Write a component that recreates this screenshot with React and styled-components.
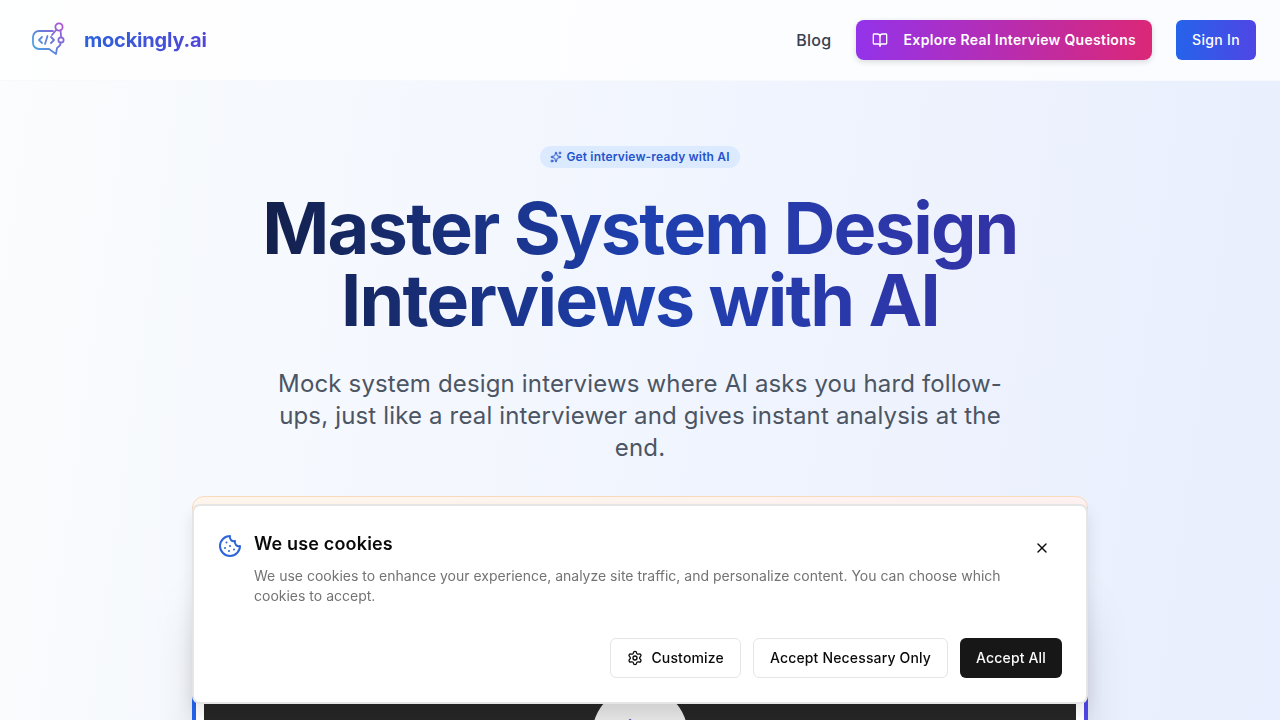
import React, { useState } from 'react';
import styled, { createGlobalStyle } from 'styled-components';
import { BookOpen, Cookie, Settings, Sparkles, X } from 'lucide-react';

const Logo = () => (
  <svg width="40" height="40" viewBox="0 0 40 40" fill="none" aria-hidden="true">
    <defs>
      <linearGradient id="logoStroke" x1="4" y1="34" x2="36" y2="6" gradientUnits="userSpaceOnUse">
        <stop offset="0" stopColor="#45aeea" />
        <stop offset="0.5" stopColor="#6480d8" />
        <stop offset="1" stopColor="#b050d4" />
      </linearGradient>
    </defs>
    <g stroke="url(#logoStroke)" strokeWidth="1.8" strokeLinecap="round" strokeLinejoin="round">
      <path d="M25 11H11a6 6 0 0 0-6 6v6a6 6 0 0 0 6 6h10l7 5 1-6c2-1 3.500-3 3.800-5.500" />
      <circle cx="31" cy="7" r="3.600" />
      <circle cx="33" cy="20" r="2.600" />
      <path d="M28.500 9.500L24 15M32.500 10.500l.7 7" />
      <path d="M14 17l-3 3 3 3M19.500 16l-2.500 8M23 17l3 3-3 3" />
    </g>
  </svg>
);

const App = () => {
  const [showCookies, setShowCookies] = useState(true);
  const closeCookies = () => setShowCookies(false);

  return (
    <Page>
      <GlobalStyle />
      <Header>
        <Brand href="/">
          <Logo />
          <BrandName>mockingly.ai</BrandName>
        </Brand>
        <Nav>
          <NavLink href="/blog">Blog</NavLink>
          <ExploreButton type="button">
            <BookOpen size={16} />
            Explore Real Interview Questions
          </ExploreButton>
          <SignInButton type="button">Sign In</SignInButton>
        </Nav>
      </Header>

      <Hero>
        <Badge>
          <Sparkles size={12} />
          Get interview-ready with AI
        </Badge>
        <Title>Master System Design Interviews with AI</Title>
        <Subtitle>
          Mock system design interviews where AI asks you hard follow-ups, just like a real
          interviewer and gives instant analysis at the end.
        </Subtitle>
        <Showcase>
          <Notice />
          <VideoFrame>
            <Video>
              <PlayButton type="button" aria-label="Play video">
                <svg width="40" height="40" viewBox="0 0 40 40" aria-hidden="true">
                  <path
                    d="M10 5l22 15-22 15z"
                    fill="#4338ca"
                    stroke="#4338ca"
                    strokeWidth="2"
                    strokeLinejoin="round"
                  />
                </svg>
              </PlayButton>
            </Video>
          </VideoFrame>
        </Showcase>
      </Hero>

      {showCookies && (
        <CookieBanner aria-labelledby="cookie-title">
          <CookieTop>
            <Cookie size={24} color="#2d64d8" />
            <CookieText>
              <CookieTitle id="cookie-title">We use cookies</CookieTitle>
              <CookieBody>
                We use cookies to enhance your experience, analyze site traffic, and personalize
                content. You can choose which cookies to accept.
              </CookieBody>
            </CookieText>
            <CloseButton type="button" aria-label="Close" onClick={closeCookies}>
              <X size={16} />
            </CloseButton>
          </CookieTop>
          <CookieActions>
            <OutlineButton type="button">
              <Settings size={16} />
              Customize
            </OutlineButton>
            <OutlineButton type="button" onClick={closeCookies}>Accept Necessary Only</OutlineButton>
            <DarkButton type="button" onClick={closeCookies}>Accept All</DarkButton>
          </CookieActions>
        </CookieBanner>
      )}
    </Page>
  );
};

// Styled Components
const GlobalStyle = createGlobalStyle`
  *, *::before, *::after {
    box-sizing: border-box;
  }

  html {
    scrollbar-width: none;
  }

  body {
    margin: 0;
    font-family: Inter, 'Liberation Sans', sans-serif;
    letter-spacing: 0.01em;
  }

  h1, h2, p {
    margin: 0;
  }

  button {
    font-family: inherit;
    letter-spacing: inherit;
    cursor: pointer;
  }

  svg {
    flex-shrink: 0;
  }
`;

const Page = styled.div`
  min-height: 100vh;
  background: linear-gradient(98deg, #fafcfd, #f1f5fe 50%, #e8eefd);
`;

const Header = styled.header`
  display: flex;
  align-items: center;
  justify-content: space-between;
  padding: 20px 24px;
  background: rgba(255, 255, 255, 0.8);
  border-bottom: 1px solid #f7f9fd;
`;

const Brand = styled.a`
  display: flex;
  align-items: center;
  gap: 16px;
  padding-left: 4px;
  text-decoration: none;
`;

const BrandName = styled.span`
  font-size: 20px;
  font-weight: 700;
  line-height: 28px;
  letter-spacing: -0.01em;
  color: transparent;
  background: linear-gradient(90deg, #2b62dc, #5145d6);
  background-clip: text;
`;

const Nav = styled.nav`
  display: flex;
  align-items: center;
  gap: 24px;
  letter-spacing: 0.02em;
`;

const NavLink = styled.a`
  font-size: 16px;
  font-weight: 500;
  line-height: 24px;
  color: #374151;
  text-decoration: none;
`;

const Button = styled.button`
  display: inline-flex;
  align-items: center;
  justify-content: center;
  gap: 8px;
  height: 40px;
  padding: 0 16px;
  border: none;
  border-radius: 6px;
  font-size: 14px;
  font-weight: 500;
  line-height: 20px;
  white-space: nowrap;
`;

const ExploreButton = styled(Button)`
  gap: 16px;
  border-radius: 8px;
  font-weight: 600;
  color: #fff;
  background: linear-gradient(90deg, #9333ea, #db2777);
  box-shadow: 0 2px 6px rgba(0, 0, 0, 0.14);
`;

const SignInButton = styled(Button)`
  color: #fff;
  background: linear-gradient(90deg, #2563eb, #4f46e5);
`;

const Hero = styled.main`
  display: flex;
  flex-direction: column;
  align-items: center;
  padding: 65px 24px 64px;
  text-align: center;
`;

const Badge = styled.div`
  display: inline-flex;
  align-items: center;
  gap: 4px;
  padding: 3px 10px;
  border-radius: 11px;
  font-size: 12px;
  font-weight: 600;
  line-height: 16px;
  color: #2453cc;
  background: #dbeafe;
`;

const Title = styled.h1`
  max-width: 896px;
  margin-top: 24px;
  font-size: 72px;
  font-weight: 700;
  line-height: 72px;
  letter-spacing: -0.025em;
  color: transparent;
  background: linear-gradient(90deg, #111a38, #1e40af 50%, #3730a3);
  background-clip: text;
`;

const Subtitle = styled.p`
  max-width: 768px;
  margin-top: 32px;
  font-size: 24px;
  line-height: 32px;
  color: #4b5563;
`;

const Showcase = styled.section`
  width: 100%;
  max-width: 896px;
  margin-top: 32px;
`;

const Notice = styled.div`
  height: 56px;
  border: 1px solid #fbd9bb;
  border-radius: 12px;
  background: linear-gradient(90deg, #fff7ed, #fef2f2);
`;

const VideoFrame = styled.div`
  margin-top: 24px;
  padding: 4px;
  border-radius: 12px;
  background: linear-gradient(90deg, #2563eb, #4f46e5);
  box-shadow: 0 25px 50px -12px rgba(0, 0, 0, 0.18);
`;

const Video = styled.div`
  display: flex;
  align-items: center;
  justify-content: center;
  height: 310px;
  border: 8px solid #fff;
  border-radius: 8px;
  background: #262626;
`;

const PlayButton = styled(Button)`
  width: 96px;
  height: 96px;
  border-radius: 50%;
  background: #e5e5e5;
`;

const CookieBanner = styled.section`
  position: fixed;
  right: 16px;
  bottom: 16px;
  left: 16px;
  display: flex;
  flex-direction: column;
  gap: 32px;
  max-width: 896px;
  margin: 0 auto;
  padding: 24px;
  border: 2px solid #e5e5e5;
  border-radius: 8px;
  background: #fff;
  box-shadow: 0 8px 16px rgba(0, 0, 0, 0.1);
`;

const CookieTop = styled.div`
  display: flex;
  align-items: flex-start;
  gap: 12px;

  & > svg {
    margin-top: 4px;
  }
`;

const CookieText = styled.div`
  flex: 1;
`;

const CookieTitle = styled.h2`
  font-size: 18px;
  font-weight: 600;
  line-height: 28px;
  color: #0a0a0a;
`;

const CookieBody = styled.p`
  margin-top: 8px;
  font-size: 14px;
  line-height: 20px;
  letter-spacing: 0;
  color: #737373;
`;

const CloseButton = styled(Button)`
  width: 40px;
  height: 36px;
  padding: 0;
  color: #0a0a0a;
  background: transparent;
`;

const CookieActions = styled.div`
  display: flex;
  justify-content: flex-end;
  gap: 12px;
`;

const OutlineButton = styled(Button)`
  border: 1px solid #e5e5e5;
  color: #0a0a0a;
  background: #fff;
`;

const DarkButton = styled(Button)`
  color: #fafafa;
  background: #171717;
`;

export default App;
